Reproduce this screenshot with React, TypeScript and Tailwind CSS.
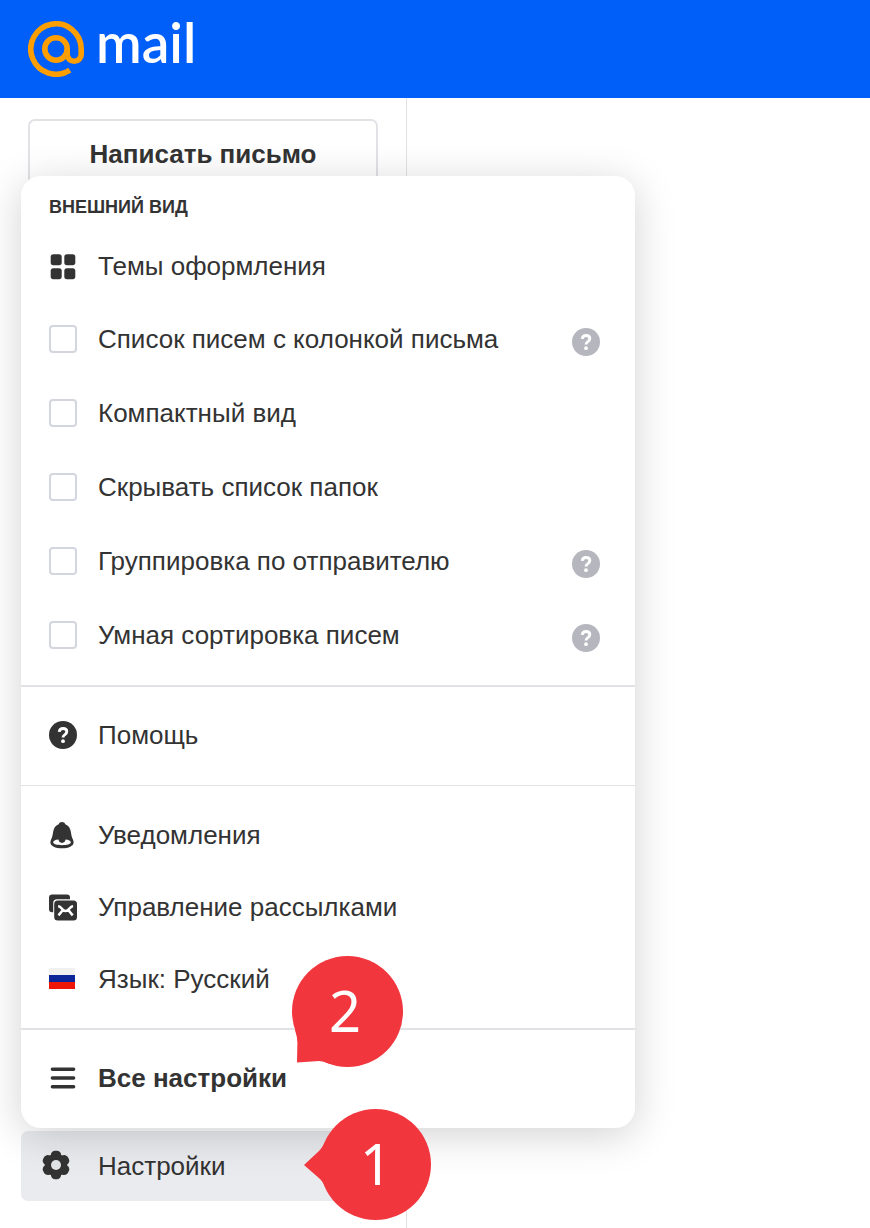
import { useState, type ReactNode } from "react"

type Option = {
    id: string
    label: string
    hint?: boolean
}

const viewOptions: Option[] = [
    { id: "split", label: "Список писем с колонкой письма", hint: true },
    { id: "compact", label: "Компактный вид" },
    { id: "hide-folders", label: "Скрывать список папок" },
    { id: "group", label: "Группировка по отправителю", hint: true },
    { id: "smart-sort", label: "Умная сортировка писем", hint: true },
]

function Logo() {
    return (
        <a href="#" className="flex items-center gap-3 text-white">
            <svg className="size-14" viewBox="0 0 56 56" fill="none" stroke="#ff9e00" strokeWidth="5.6">
                <circle cx="28" cy="28" r="11.2" />
                <path d="M39.2 28v5.2a7 7 0 0 0 14 0V28A25.2 25.2 0 1 0 41.8 49.1" />
            </svg>
            <span className="pb-3.5 font-['Lato',sans-serif] text-[55px] leading-14 font-semibold">mail</span>
        </a>
    )
}

function GridIcon() {
    return (
        <svg className="size-7" viewBox="0 0 28 28" fill="currentColor">
            <rect x="1.7" y="2.2" width="11" height="11" rx="2.6" />
            <rect x="15.3" y="2.2" width="11" height="11" rx="2.6" />
            <rect x="1.7" y="16.2" width="11" height="11" rx="2.6" />
            <rect x="15.3" y="16.2" width="11" height="11" rx="2.6" />
        </svg>
    )
}

function QuestionIcon() {
    return (
        <svg className="size-7" viewBox="0 0 28 28" fill="none">
            <circle cx="14" cy="14" r="14" fill="currentColor" />
            <path d="M10.2 10.9c.2-2.1 1.7-3.4 3.9-3.4s3.7 1.2 3.7 3.1c0 1.4-.8 2.2-1.9 3-1.2.8-1.9 1.3-1.9 2.9" stroke="#fff" strokeWidth="2.9" />
            <circle cx="14" cy="20.2" r="1.9" fill="#fff" />
        </svg>
    )
}

function BellIcon() {
    return (
        <svg className="size-7" viewBox="0 0 28 28" fill="currentColor">
            <path d="M13 1c1.6 0 2.8.8 3.3 2.2C19.6 4.6 21.2 7 21.800 10.500c.4 3 .8 5.200 2 7.800.6 1.300.8 2.200.8 3.200 0 3.500-5 5.800-11.600 5.800S1.400 25 1.400 21.500c0-1 .2-1.900.8-3.200 1.200-2.600 1.600-4.800 2-7.800C4.800 7 6.400 4.600 9.700 3.200 10.200 1.800 11.400 1 13 1z" />
            <path d="M4.200 21.300c0-1.400 2.100-2.400 5.200-2.700.3 2 1.700 3.300 3.600 3.300s3.300-1.300 3.600-3.300c3.100.3 5.200 1.300 5.200 2.700 0 1.800-3.900 2.900-8.800 2.900s-8.800-1.100-8.800-2.900z" fill="#fff" />
        </svg>
    )
}

function MailingsIcon() {
    return (
        <svg className="size-7" viewBox="0 0 28 28" fill="none">
            <path d="M3.2 1.6H18a3 3 0 0 1 3 3v1.6H8A3.8 3.8 0 0 0 4.2 10v9.3H3.2A3.2 3.2 0 0 1 0 16.100V4.800a3.200 3.200 0 0 1 3.200-3.200z" fill="currentColor" />
            <rect x="5.200" y="7.600" width="22.800" height="20" rx="3.500" fill="currentColor" />
            <path d="M9.100 13.200q1.600.1 3 1.600l2 2q2.500 2.400 5 0l2-2q1.400-1.500 3-1.600M9.500 22.400l4.600-5.600M23.700 22.400l-4.600-5.600" stroke="#fff" strokeWidth="2.500" />
        </svg>
    )
}

function FlagIcon() {
    return (
        <svg className="size-7" viewBox="0 0 28 28">
            <path fill="#f0f0f0" d="M0 3h26v7H0z" />
            <path fill="#0c269a" d="M0 10h26v7H0z" />
            <path fill="#ee1606" d="M0 17h26v7H0z" />
        </svg>
    )
}

function ListIcon() {
    return (
        <svg className="size-7" viewBox="0 0 28 28" fill="none" stroke="currentColor" strokeWidth="3.5" strokeLinecap="round">
            <path d="M3.4 5.2h21.2M3.4 14h21.2M3.4 22.800h21.200" />
        </svg>
    )
}

function GearIcon() {
    return (
        <svg className="size-7 overflow-visible" viewBox="0 1 28 28" fill="currentColor">
            <circle cx="14" cy="14" r="11.2" />
            {[0, 60, 120, 180, 240, 300].map((angle) => (
                <rect key={angle} x="8.900" y="-.2" width="10.200" height="9" rx="4.200" transform={`rotate(${angle} 14 14)`} />
            ))}
            <circle cx="14" cy="14" r="5" fill="#e3e4e8" />
        </svg>
    )
}

type MenuItemProps = {
    icon: ReactNode
    bold?: boolean
    children: ReactNode
}

function MenuItem({ icon, bold, children }: MenuItemProps) {
    return (
        <button type="button" className="flex h-18 w-full items-center gap-[21px] px-7 text-left">
            {icon}
            <span className={bold ? "font-bold" : ""}>{children}</span>
        </button>
    )
}

function CheckItem({ option }: { option: Option }) {
    const [checked, setChecked] = useState(false)

    return (
        <div className="flex h-[74px] items-center gap-[21px] pr-[35px] pl-7">
            <input
                id={option.id}
                type="checkbox"
                checked={checked}
                onChange={() => setChecked(!checked)}
                className="size-7 appearance-none rounded-sm border-2 border-[#d3d5df] bg-white checked:bg-[#005ff9]"
            />
            <label htmlFor={option.id} className="grow">{option.label}</label>
            {option.hint && (
                <button type="button" aria-label="Подсказка" className="mt-1.5 text-[#b6b7be]">
                    <QuestionIcon />
                </button>
            )}
        </div>
    )
}

function SettingsMenu() {
    return (
        <div className="absolute bottom-full left-0 mb-[3px] w-[614px] rounded-[20px] bg-white shadow-[0_7px_42px_rgba(0,0,0,0.18)]">
            <section className="border-b-2 border-[#e1e2e6] pb-[13px]">
                <h2 className="h-[54px] px-7 pt-[19px] text-lg leading-6 font-bold uppercase">Внешний вид</h2>
                <MenuItem icon={<GridIcon />}>Темы оформления</MenuItem>
                {viewOptions.map((option) => (
                    <CheckItem key={option.id} option={option} />
                ))}
            </section>
            <section className="border-b border-[#e1e2e6] pt-3 pb-3.5">
                <MenuItem icon={<QuestionIcon />}>Помощь</MenuItem>
            </section>
            <section className="border-b-2 border-[#e1e2e6] py-[13px]">
                <MenuItem icon={<BellIcon />}>Уведомления</MenuItem>
                <MenuItem icon={<MailingsIcon />}>Управление рассылками</MenuItem>
                <MenuItem icon={<FlagIcon />}>Язык: Русский</MenuItem>
            </section>
            <section className="relative pt-3 pb-3.5">
                <MenuItem icon={<ListIcon />} bold>Все настройки</MenuItem>
                <div className="absolute -top-[74px] left-[271px] flex size-28 items-center justify-center pr-1.5 pb-1">
                    <svg className="absolute inset-0 size-28" viewBox="0 0 112 112" fill="#f1363d">
                        <circle cx="55.5" cy="55.5" r="55.5" />
                        <path d="M5 106.5L5.4 87Q5.4 81 3 74L40 50l10 50-12 8Q32 105 27 105z" />
                    </svg>
                    <StepNumber>2</StepNumber>
                </div>
            </section>
        </div>
    )
}

function StepNumber({ children }: { children: ReactNode }) {
    return <span className="relative font-['Noto_Sans',sans-serif] text-[56px] leading-none text-white">{children}</span>
}

export default function App() {
    return (
        <div className="flex min-h-screen flex-col bg-white font-['Liberation_Sans',Arial,sans-serif] text-[26px] leading-8 text-[#333]">
            <header className="flex h-[98px] items-center bg-[#005ff9] px-7">
                <Logo />
            </header>
            <div className="flex grow">
                <aside className="flex min-h-[1130px] w-[407px] flex-col justify-between border-r border-[#e1e2e6] pt-[21px] pb-[27px]">
                    <button type="button" className="mx-7 h-[70px] rounded-[7px] border-2 border-[#e1e2e6] font-bold">
                        Написать письмо
                    </button>
                    <div className="relative mx-[21px]">
                        <button type="button" className="flex h-[70px] w-full items-center gap-7 rounded-[7px] bg-[#eaebef] px-[21px]">
                            <GearIcon />
                            Настройки
                        </button>
                        <SettingsMenu />
                        <div className="absolute -top-[22px] left-[283px] flex h-28 w-32 items-center justify-center pb-1 pl-4">
                            <svg className="absolute inset-0 h-28 w-32" viewBox="0 0 128 112" fill="#f1363d">
                                <circle cx="71.5" cy="55.5" r="55.5" />
                                <path d="M0 56L15 42Q19 38 24 27h20v56H24Q20 74 16 70z" />
                            </svg>
                            <StepNumber>1</StepNumber>
                        </div>
                    </div>
                </aside>
                <main className="grow" />
            </div>
        </div>
    )
}
